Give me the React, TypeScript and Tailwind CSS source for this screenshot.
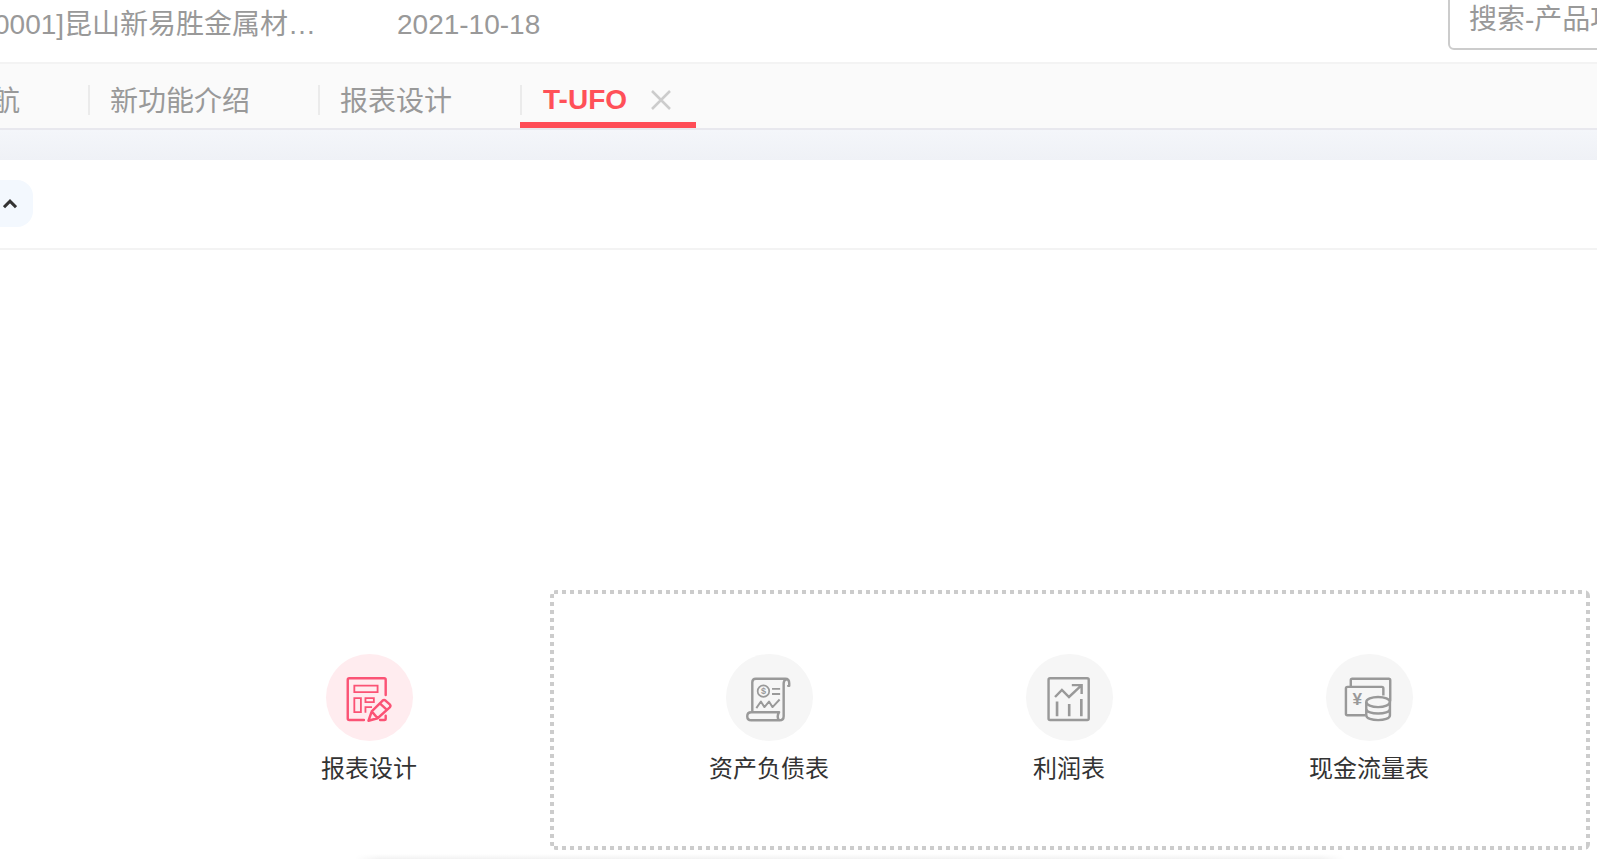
import type { ReactNode } from "react";

const tabs = ["新功能介绍", "报表设计"];

function ReportDesignIcon() {
  return (
    <svg viewBox="0 0 86 86" className="size-full" fill="none" stroke="currentColor" strokeWidth="2.400" strokeLinejoin="round" strokeLinecap="round" aria-hidden="true">
      <path d="M37.5 65.3H23q-1.5 0-1.5-1.5V25.500q0-1.500 1.500-1.500H57.500q1.500 0 1.500 1.500V40.500M59 61V64q0 1.300-1.300 1.300H53.500" />
      <path strokeWidth="1.800" strokeLinejoin="miter" strokeLinecap="butt" d="M28 31.300H51V37.700H28ZM28 43.700H34.500V57.500H28ZM39 43.700H47.300V47.500H39ZM45.500 52.500H39V58" />
      <path d="M42 66l3.200-9.300L56 46q1.400-1.200 2.800 0l4.200 3.800q1.400 1.400 0 2.900L51 63.500ZM45.200 56.700l5.800 6.800M53.500 49l6.500 6" />
    </svg>
  );
}

function BalanceSheetIcon() {
  return (
    <svg viewBox="0 0 86 86" className="size-full" fill="none" stroke="currentColor" strokeWidth="2.400" strokeLinejoin="round" strokeLinecap="round" aria-hidden="true">
      <path d="M26 57V28q0-3.500 3.500-3.500H58.500q4 0 4 4.500v2.500H61.500" />
      <path d="M59.500 25q-2.500 1-2.500 4V61.500q0 4-4 4H25q-4 0-4-4t4-4H52.500q-2.500 4-.500 7.500" />
      <circle cx="37" cy="36.700" r="5.700" strokeWidth="1.700" />
      <text x="37" y="40" textAnchor="middle" fontSize="9" fontWeight="700" fontFamily="Liberation Sans, sans-serif" fill="currentColor" stroke="none">$</text>
      <path strokeWidth="1.900" strokeLinecap="butt" d="M45.500 34.500H53.500M45.500 39.500H53.500M30 53.500L34.500 47l3.500 5.500L42.500 47l3.500 5.500L53 45" />
    </svg>
  );
}

function ProfitIcon() {
  return (
    <svg viewBox="0 0 86 86" className="size-full" fill="none" stroke="currentColor" strokeWidth="2.400" aria-hidden="true">
      <rect x="22.300" y="24" width="39.700" height="41.300" rx="1.500" />
      <path d="M28.700 42.500L35.500 35.500 42.500 42.500 54.500 31.300M45.300 30.800H55V39.500" />
      <path strokeWidth="2.600" d="M30.700 47V61.500M42.700 49.500V61.500M54.700 44.500V61.500" />
    </svg>
  );
}

function CashFlowIcon() {
  return (
    <svg viewBox="0 0 86 86" className="size-full" fill="none" stroke="currentColor" strokeWidth="2.400" strokeLinejoin="round" aria-hidden="true">
      <path d="M24.500 32V26q0-1.500 1.500-1.500H62q1.500 0 1.500 1.500V47" />
      <path d="M39 60.500H21.200q-1.500 0-1.500-1.500V34q0-1.500 1.500-1.500H55.200q1.500 0 1.500 1.500V41" />
      <text x="31" y="50.500" textAnchor="middle" fontSize="17" fontWeight="700" fontFamily="Liberation Sans, sans-serif" fill="currentColor" stroke="none">¥</text>
      <ellipse cx="51.500" cy="47.500" rx="11.700" ry="5" />
      <path d="M39.800 47.500V60.500c0 6.500 23.400 6.500 23.400 0V47.500M39.800 54c0 6.500 23.400 6.500 23.400 0" />
    </svg>
  );
}

function Entry({ label, active, children }: { label: string; active?: boolean; children: ReactNode }) {
  return (
    <button type="button" className="flex flex-col items-center gap-2.5 text-2xl leading-9 text-[#333]">
      <span className={active ? "block size-[87px] rounded-full bg-[#ffecef] text-[#fb5375]" : "block size-[87px] rounded-full bg-[#f6f6f6] text-[#999]"}>
        {children}
      </span>
      {label}
    </button>
  );
}

export default function App() {
  return (
    <div className="flex h-screen flex-col overflow-hidden bg-white font-['Liberation_Sans','Noto_Sans_CJK_SC',sans-serif] text-[28px] leading-8 text-[#999]">
      <header className="flex h-16 shrink-0 items-start border-b-2 border-[#f3f3f3] pt-[9px]">
        <p className="-ml-1.5 w-[403px] shrink-0 whitespace-nowrap">0001]昆山新易胜金属材…</p>
        <time dateTime="2021-10-18">2021-10-18</time>
        <input
          type="search"
          aria-label="搜索"
          placeholder="搜索-产品项"
          className="-mr-40 -mt-[19px] ml-auto h-[60px] w-[309px] shrink-0 rounded-md border-2 border-[#ccc] bg-white px-[19px] outline-none placeholder:text-[#999]"
        />
      </header>

      <nav className="flex h-[66px] shrink-0 items-stretch border-b-2 border-[#e8e8ee] bg-[#fafafa]">
        <a href="#nav" className="-ml-2 flex w-24 items-center pt-3">航</a>
        {tabs.map((tab) => (
          <a key={tab} href="#tab" className="flex items-center whitespace-nowrap pr-[68px] pt-2">
            <span className="mr-5 h-[30px] w-0.5 bg-[#ebebeb]" />
            <span className="pt-1">{tab}</span>
          </a>
        ))}
        <div className="flex w-44 items-center border-b-6 border-[#ff4d57] pt-3.5 text-[#ff5058]">
          <span className="mr-[21px] h-[30px] w-0.5 bg-[#ebebeb]" />
          <a href="#t-ufo" className="font-bold">T-UFO</a>
          <button type="button" aria-label="关闭" className="ml-6 size-5 text-[#ccc]">
            <svg viewBox="0 0 20 20" className="size-full" fill="none" stroke="currentColor" strokeWidth="2.500" aria-hidden="true">
              <path d="M1 1L19 19M19 1L1 19" />
            </svg>
          </button>
        </div>
      </nav>

      <div className="h-[30px] shrink-0 bg-linear-to-b from-[#f4f6fa] to-[#eff1f6]" />

      <div className="flex h-[90px] shrink-0 items-start border-b-2 border-[#f3f3f3] pt-5">
        <button type="button" aria-label="收起" className="-ml-4 flex h-[47px] w-[49px] items-center justify-end rounded-2xl bg-[#f3f8fe] pr-4 text-[#333]">
          <svg viewBox="0 0 14 10" className="h-2.5 w-3.5" fill="none" stroke="currentColor" strokeWidth="3" aria-hidden="true">
            <path d="M1 8.200L7 2.200 13 8.200" />
          </svg>
        </button>
      </div>

      <main className="grid shrink-0 grid-cols-[550px_1fr] pr-[7px] pt-[340px]">
        <div className="flex justify-center pl-[188px] pt-16">
          <Entry label="报表设计" active>
            <ReportDesignIcon />
          </Entry>
        </div>
        <section className="grid h-[260px] grid-cols-3 items-start rounded-md bg-no-repeat pl-[69px] pr-[71px] pt-16 [background-image:repeating-linear-gradient(to_right,transparent_0_4px,#ccc_4px_8px),repeating-linear-gradient(to_right,transparent_0_4px,#ccc_4px_8px),repeating-linear-gradient(to_bottom,transparent_0_4px,#ccc_4px_8px),repeating-linear-gradient(to_bottom,transparent_0_4px,#ccc_4px_8px)] [background-position:left_top,left_bottom,left_top,right_top] [background-size:100%_4px,100%_4px,4px_100%,4px_100%]">
          <Entry label="资产负债表">
            <BalanceSheetIcon />
          </Entry>
          <Entry label="利润表">
            <ProfitIcon />
          </Entry>
          <Entry label="现金流量表">
            <CashFlowIcon />
          </Entry>
        </section>
      </main>

      <div className="ml-[355px] mr-[252px] mt-1 h-2 shrink-0 bg-linear-to-b from-white to-[#eaeaea] [mask-image:linear-gradient(to_right,transparent,black_24px,black_calc(100%_-_24px),transparent)]" />
    </div>
  );
}
